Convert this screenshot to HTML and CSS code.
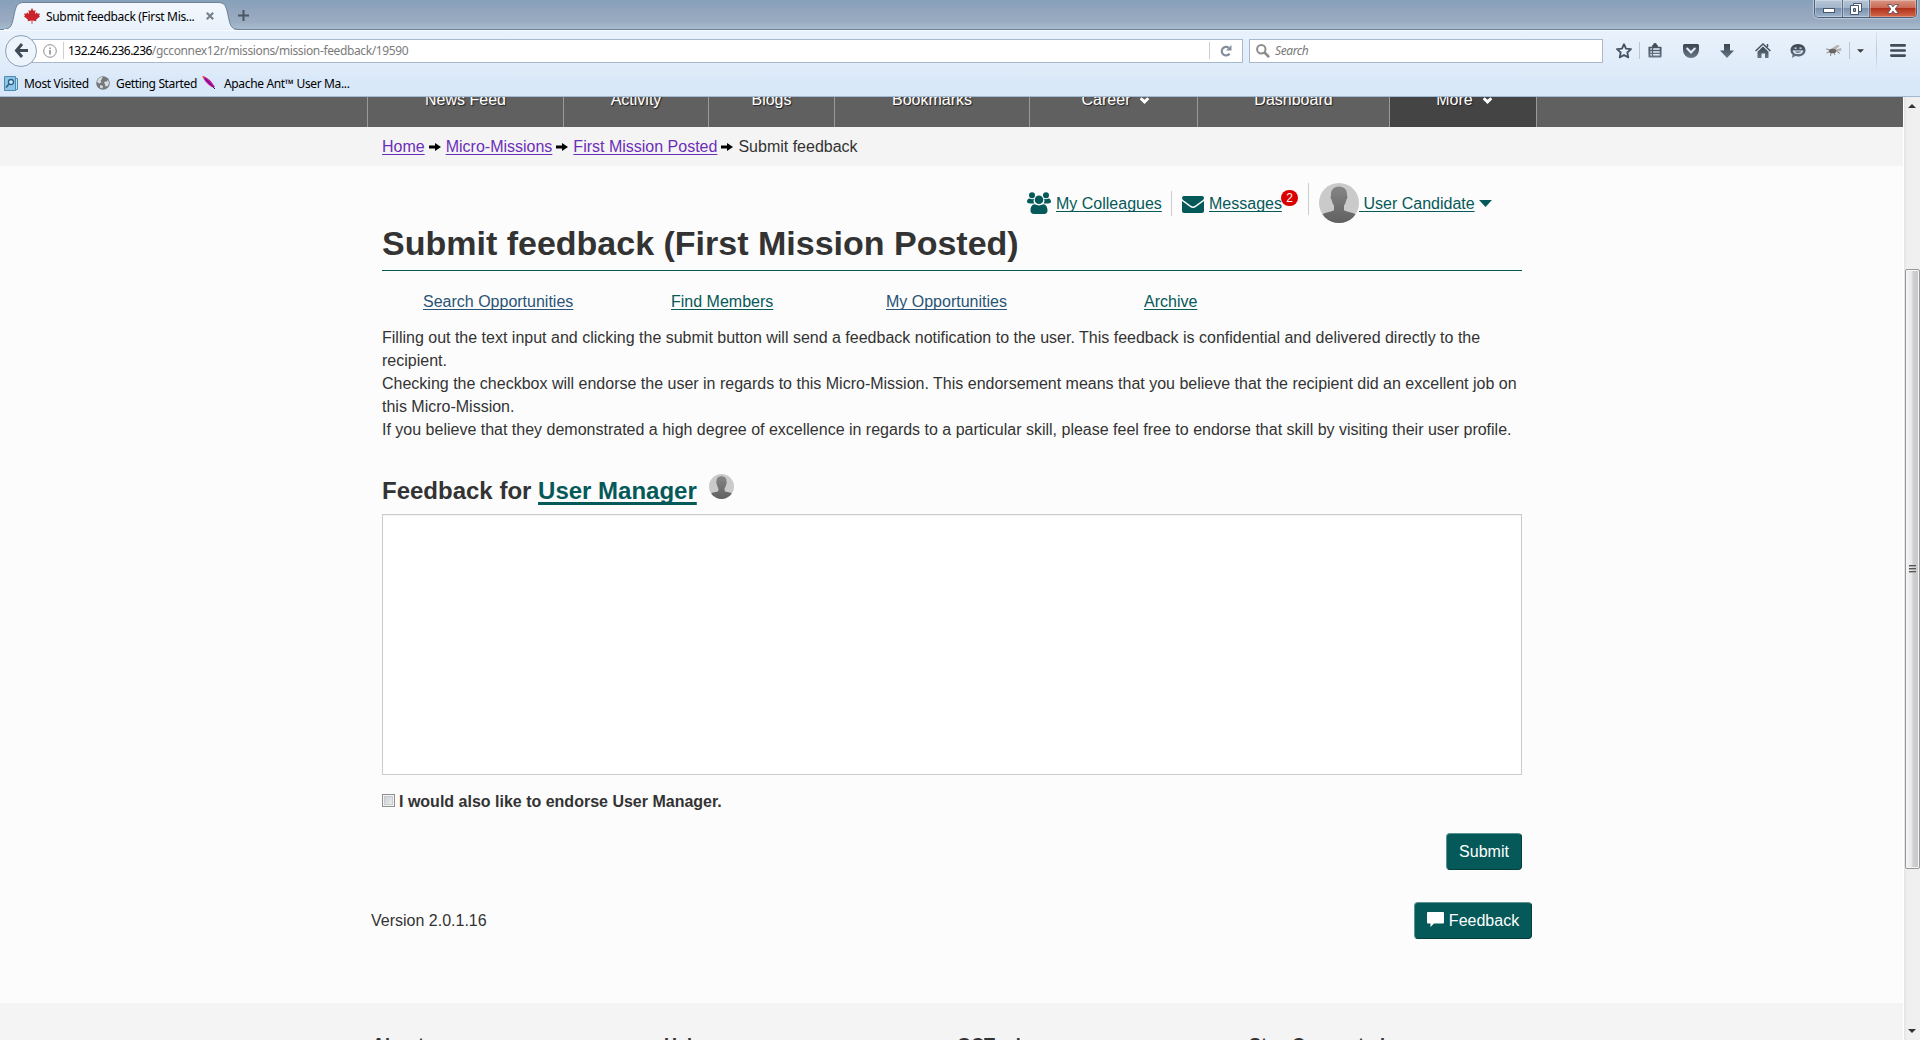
FILE: index.html
```html
<!DOCTYPE html>
<html lang="en">
<head>
<meta charset="utf-8">
<title>Submit feedback (First Mission Posted)</title>
<link rel="stylesheet" href="styles.css">
</head>
<body>
<svg class="defs" width="0" height="0">
  <defs>
    <linearGradient id="bust" x1="0" y1="0" x2="0" y2="1"><stop offset="0" stop-color="#858585"/><stop offset="1" stop-color="#606060"/></linearGradient>
    <linearGradient id="ico" x1="0" y1="0" x2="0" y2="1"><stop offset="0" stop-color="#39444f"/><stop offset="1" stop-color="#687887"/></linearGradient>
    <clipPath id="round"><circle cx="20" cy="20" r="20"/></clipPath>
    <symbol id="avatar" viewBox="0 0 40 40"><g clip-path="url(#round)"><path fill="#cacaca" d="M0 0h40v40H0z"/><path fill="url(#bust)" d="M20 3.500c5.500 0 8.300 3.500 8 9 .8 1 .4 3.300-.6 4.200-.6 3-1.400 4.400-2.400 5.800v4.800c2 1.800 10 2 12 4.500V40H3v-8.200c2-2.500 10-2.700 12-4.500v-4.800c-1-1.400-1.800-2.800-2.400-5.800-1-.9-1.400-3.200-.6-4.200-.3-5.500 2.500-9 8-9z"/></g></symbol>
    <symbol id="arrow" viewBox="0 0 12 10"><path d="M0 3.600h6V1L12 5 6 9V6.400H0z"/></symbol>
    <symbol id="chevron" viewBox="0 0 12 8"><path d="M.5 2.500 2.700.3 6 3.200 9.300.300 11.500 2.500 6 8z"/></symbol>
  </defs>
</svg>
<div class="window">
  <div class="titlebar">
    <div class="tab">
      <svg class="tab-shape" width="240" height="30" viewBox="0 0 240 30"><defs><linearGradient id="tabfill" x1="0" y1="0" x2="0" y2="1"><stop offset="0" stop-color="#f3f8fd"/><stop offset="1" stop-color="#e8f1fb"/></linearGradient></defs><path fill="url(#tabfill)" stroke="#6d8299" d="M-1 29.500H3C12 29 12 24 14 15 16 6 17 2.500 24 2.500h194c7 0 8 3.500 10 12.500 2 9 2 14 11 14.500"/><path stroke="#e8f1fb" stroke-width="2" d="M4 30h230"/></svg>
      <svg class="leaf" width="16" height="16" viewBox="0 0 16 16"><path fill="#c9242b" d="m8 0 1.600 3 1.900-1-.6 4L13 4.300l.5 1.500 2.500-.4-.9 2.400.9.700-4 3.200.4 1.500-4-.6V16h-.8v-3.400l-4 .6.4-1.500-4-3.200.9-.7L0 5.400l2.500.4L3 4.300 5.100 6l-.6-4 1.900 1z"/></svg>
      <span class="tab-title">Submit feedback (First Mis...</span>
      <svg class="tab-close" width="8" height="8" viewBox="0 0 8 8"><path stroke="#77818c" stroke-width="2.200" d="m.8.8 6.400 6.400M7.200.8.800 7.200"/></svg>
    </div>
    <svg class="newtab" width="11" height="11" viewBox="0 0 11 11"><path stroke="#4b5763" stroke-width="2" d="M5.500 0v11M0 5.500h11"/></svg>
    <div class="controls">
      <span class="ctl min"><i></i></span>
      <span class="ctl max"><svg width="12" height="12" viewBox="0 0 12 12"><path fill="#fff" stroke="#47566a" d="M3.500.5h8v8h-8z"/><path fill="#fff" stroke="#47566a" d="M.5 2.500h8v9h-8z"/><path fill="#8fa3bb" stroke="#47566a" d="M3.500 5.500h2v3h-2z"/></svg></span>
      <span class="ctl close"><svg width="12" height="10" viewBox="0 0 12 10"><path fill="#fff" stroke="#5a4450" stroke-width=".8" d="M.5.500h3.700L6 2.900 7.800.500h3.700L8.200 5l3.300 4.500H7.800L6 7.100 4.200 9.500H.5L3.800 5z"/></svg></span>
    </div>
  </div>
  <div class="toolbar">
    <div class="back"><svg width="14" height="15" viewBox="0 0 14 15"><path fill="none" stroke="#414c57" stroke-width="3" d="M8 1 2.500 7.500 8 14M2.500 7.500H14"/></svg></div>
    <div class="urlbar">
      <svg class="info" width="14" height="14" viewBox="0 0 14 14"><circle cx="7" cy="7" r="6.300" fill="none" stroke="#8d8d8d"/><path stroke="#8d8d8d" stroke-width="1.600" d="M7 6v4.500M7 3.400v1.600"/></svg>
      <span class="url"><b>132.246.236.236</b>/gcconnex12r/missions/mission-feedback/19590</span>
      <span class="reload"><svg width="12" height="12" viewBox="0 0 12 12"><path fill="none" stroke="#848e9a" stroke-width="2.200" d="M9.600 8.700A4.300 4.300 0 1 1 8.700 2.800"/><path fill="#848e9a" d="M11.500 0v5.500H6z"/></svg></span>
    </div>
    <div class="search"><svg width="14" height="14" viewBox="0 0 14 14"><circle cx="5.300" cy="5.300" r="4.200" fill="none" stroke="#8c8c8c" stroke-width="2"/><path stroke="#8c8c8c" stroke-width="2.600" d="m8.500 8.500 4.600 4.600"/></svg><span>Search</span></div>
    <div class="tools">
      <svg width="16" height="16" viewBox="0 0 16 16"><path fill="none" stroke="#45525f" stroke-width="1.800" stroke-linejoin="round" d="m8 1.200 2 4.500 5 .5-3.700 3.300 1 4.900L8 12l-4.300 2.400 1-4.900L1 6.200l5-.5z"/></svg>
      <i class="divider"></i>
      <svg class="t-list" width="14" height="15" viewBox="0 0 14 16"><path fill="url(#ico)" d="M5 2a2 2 0 0 1 4 0h1v2h3.500a.5.500 0 0 1 .5.500v10a1 1 0 0 1-1 1H1a1 1 0 0 1-1-1v-10A.5.500 0 0 1 .5 4H4V2z"/><path fill="none" stroke="#e5effa" stroke-width="1.600" d="M2 6.500h1.700M5 6.500h7M2 9.500h1.700M5 9.500h7M2 12.500h1.700M5 12.500h7"/></svg>
      <svg class="t-pocket" width="16" height="14" viewBox="0 0 16 14"><path fill="url(#ico)" d="M1.500 0h13A1.500 1.500 0 0 1 16 1.500V6A8 8 0 0 1 0 6V1.500A1.500 1.500 0 0 1 1.500 0z"/><path fill="none" stroke="#e5effa" stroke-width="2" stroke-linecap="round" d="m4.200 4.500 3.800 4 3.800-4"/></svg>
      <svg class="t-down" width="14" height="14" viewBox="0 0 14 14"><path fill="url(#ico)" d="M4 0h6v6.500h4L7 14 0 6.500h4z"/></svg>
      <svg class="t-home" width="16" height="15" viewBox="0 0 16 15"><path fill="none" stroke="#45525f" stroke-width="1.500" d="M.6 8 8 1l7.400 7M12.500 1v3"/><path fill="url(#ico)" d="m8 3.500 5.500 5.200V15H10v-4.500H6.500V15h-4V8.700z"/></svg>
      <svg class="t-chat" width="16" height="14" viewBox="0 0 16 14"><path fill="url(#ico)" d="M8 0c4.500 0 7.500 2.800 7.500 6.200S12.500 12.500 8 12.500c-1 0-2-.1-2.800-.4L2 14l.6-3.200A6 6 0 0 1 .5 6.200C.5 2.800 3.500 0 8 0z"/><path fill="none" stroke="#e5effa" stroke-width="1.200" d="M4.500 4.200h2M9.500 4.200h2M3.500 7c1 3.300 8 3.300 9 0z"/></svg>
      <svg class="t-bug" width="16" height="13" viewBox="0 0 16 13"><path fill="#b5b3b0" d="m5 5 6-4 3 .8L9 6zM8 6l7-2 .5 2.500L9 8z"/><ellipse cx="6.500" cy="7" rx="3.800" ry="2.300" fill="#6b6662"/><path fill="none" stroke="#8b8783" d="M3 5.500 0 5M3 8l-2.500 1M5 9l-.5 3M8 9l1 2M11 7.500l3 2"/></svg>
      <i class="divider d2"></i>
      <svg class="t-caret" width="7" height="4" viewBox="0 0 8 4"><path fill="#3b3b3b" d="M0 0h8L4 4z"/></svg>
      <i class="divider d3"></i>
      <svg class="t-menu" width="16" height="13" viewBox="0 0 16 13"><path stroke="#414c57" stroke-width="2.600" stroke-linecap="round" d="M1.300 1.400h13.400M1.300 6.500h13.400M1.300 11.600h13.400"/></svg>
    </div>
  </div>
  <div class="bookmarks">
    <svg width="14" height="15" viewBox="0 0 14 15"><path fill="#c4e0f3" stroke="#4a8ab5" d="M2.500 2.500h11v11h-11z"/><path fill="#8fc4e6" stroke="#4a8ab5" d="M.5.500h11v14H.5z"/><circle cx="7" cy="6" r="2.500" fill="#d8edf9" stroke="#2e5f86" stroke-width="1.300"/><path stroke="#2e5f86" stroke-width="1.500" d="m5 8-3 3.500"/></svg>
    <span class="bm1">Most Visited</span>
    <svg width="14" height="14" viewBox="0 0 14 14"><circle cx="7" cy="7" r="6.800" fill="#75797d"/><path fill="#d9dcdf" d="M2 3c1.500-1.500 3-2 4.500-2L6 3 4.500 4.500l1 1.500-2 1.500L1 6zM8 6l2.500-.5L12 4l1 3-1 3-2.500.5L9 8.500zM4 9l3 1-.5 2.500L4 11.500z"/></svg>
    <span class="bm2">Getting Started</span>
    <svg width="16" height="15" viewBox="0 0 16 15"><path fill="#d9138a" d="M.5 0c3 .5 7 3.500 9 6l3.500 5-2 .5C7 10 2 5 .5 0z"/><path stroke="#5b1aa5" stroke-width="1.200" d="m3 2.500 8 8"/><path stroke="#e08a1c" d="M.5.500 2 3"/><path stroke="#222" d="m11 11 2 2"/></svg>
    <span class="bm3">Apache Ant™ User Ma...</span>
  </div>

  <div class="view">
    <div class="page">
      <div class="nav">
        <a class="w1">News Feed</a><a class="w2">Activity</a><a class="w3">Blogs</a><a class="w4">Bookmarks</a><a class="w5">Career<svg width="11" height="7"><use href="#chevron"/></svg></a><a class="w6">Dashboard</a><a class="w7">More<svg width="11" height="7"><use href="#chevron"/></svg></a>
      </div>
      <div class="crumbs"><a>Home</a><svg width="12" height="10"><use href="#arrow"/></svg><a>Micro-Missions</a><svg width="12" height="10"><use href="#arrow"/></svg><a>First Mission Posted</a><svg width="12" height="10"><use href="#arrow"/></svg><span>Submit feedback</span></div>
      <div class="main">
        <div class="usermenu">
          <svg width="24" height="22" viewBox="0 0 24 22"><g fill="#055959"><circle cx="5" cy="3.300" r="3"/><circle cx="19" cy="3.300" r="3"/><path d="M2.500 6.500c2 .8 3 .8 4.500.3-.8 2-.5 3.500.4 4.700H3c-2 0-3-.8-3-2C0 8 1 6.500 2.500 6.500zM21.500 6.500c-2 .8-3 .8-4.500.3.8 2 .5 3.500-.4 4.700H21c2 0 3-.8 3-2 0-1.500-1-3-2.500-3z"/><circle cx="12" cy="7.800" r="4.300"/><path d="M7.800 12.300c2.500 1.500 5.900 1.500 8.400 0 3 .2 4.300 3 4.300 6.200 0 2.300-1.200 3.500-3.500 3.500H7c-2.300 0-3.500-1.200-3.500-3.500 0-3.200 1.300-6 4.300-6.200z"/></g></svg>
          <a class="colleagues">My Colleagues</a>
          <i class="bar"></i>
          <svg class="env" width="22" height="17" viewBox="0 0 22 17"><path fill="#055959" d="M2 0h18a2 2 0 0 1 2 2c0 .8-.6 1.600-1.400 2.200L13 9.700c-1.400.9-2.600.9-4 0L1.400 4.200C.6 3.600 0 2.800 0 2a2 2 0 0 1 2-2z"/><path fill="#055959" d="M0 4.900 7.800 10.800c2.300 1.700 4.100 1.700 6.400 0L22 4.900V15a2 2 0 0 1-2 2H2a2 2 0 0 1-2-2z"/></svg>
          <a class="messages">Messages<em>2</em></a>
          <i class="bar tall"></i>
          <svg class="pic" width="40" height="40"><use href="#avatar"/></svg>
          <a class="who">&nbsp;User Candidate</a>
          <svg class="down" width="13" height="7" viewBox="0 0 13 7"><path fill="#055959" d="M0 0h13L6.500 7z"/></svg>
        </div>
        <h1>Submit feedback (First Mission Posted)</h1>
        <div class="links"><a class="l1 blue">Search Opportunities</a><a class="l2">Find Members</a><a class="l3 blue">My Opportunities</a><a class="l4">Archive</a></div>
        <p>Filling out the text input and clicking the submit button will send a feedback notification to the user. This feedback is confidential and delivered directly to the<br>recipient.<br>Checking the checkbox will endorse the user in regards to this Micro-Mission. This endorsement means that you believe that the recipient did an excellent job on<br>this Micro-Mission.<br>If you believe that they demonstrated a high degree of excellence in regards to a particular skill, please feel free to endorse that skill by visiting their user profile.</p>
        <h2><span>Feedback for <a>User Manager</a></span><svg width="25" height="25"><use href="#avatar"/></svg></h2>
        <div class="textarea"></div>
        <div class="check"><i></i><b>I would also like to endorse User Manager.</b></div>
        <div class="actions"><span class="btn submit">Submit</span></div>
        <div class="version"><span>Version 2.0.1.16</span><span class="btn feedback"><svg width="17" height="15" viewBox="0 0 17 15"><path fill="#fff" d="M1 0h15a1 1 0 0 1 1 1v9.500a1 1 0 0 1-1 1H7L3.500 15v-3.500H1a1 1 0 0 1-1-1V1a1 1 0 0 1 1-1z"/></svg>Feedback</span></div>
      </div>
      <div class="footer"><span>About</span><span>Help</span><span>GCTools</span><span>Stay Connected</span></div>
    </div>
    <div class="scroll">
      <svg class="up" width="8" height="4" viewBox="0 0 8 4"><path fill="#333" d="M4 0l4 4H0z"/></svg>
      <div class="thumb"><i></i><i></i><i></i></div>
      <svg class="dn" width="8" height="4" viewBox="0 0 8 4"><path fill="#333" d="M0 0h8L4 4z"/></svg>
    </div>
  </div>
</div>
</body>
</html>
```
FILE: styles.css
```css
* { box-sizing: border-box; }
body { margin: 0; background: #fcfcfc; font: 16px/23px "Liberation Sans", Arial, sans-serif; color: #333; overflow: hidden; }
svg { display: block; flex: none; }
.defs { position: absolute; }
.window { width: 1920px; height: 1040px; display: flex; flex-direction: column; overflow: hidden; }

/* browser frame */
.titlebar, .toolbar, .bookmarks { font-family: "Noto Sans", "Open Sans", sans-serif; font-size: 12px; white-space: nowrap; color: #000; }
.titlebar { height: 30px; flex: none; display: flex; background: linear-gradient(#87a0ba, #93a6be 40%, #9aacc1 75%, #a9bccf); border-bottom: 1px solid #6d8299; }
.tab { position: relative; width: 242px; height: 30px; display: flex; align-items: center; padding: 2px 0 0 24px; }
.tab-shape { position: absolute; left: 0; top: 0; }
.leaf, .tab-title, .tab-close { position: relative; }
.tab-title { width: 150px; margin-left: 6px; letter-spacing: -0.33px; }
.tab-close { margin-left: 10px; }
.newtab { margin-top: 10px; margin-left: -4px; }
.controls { margin-left: auto; margin-right: 3px; width: 103px; height: 18px; display: flex; border: 1px solid #4c5f78; border-top: 0; border-radius: 0 0 5px 5px; overflow: hidden; box-shadow: 0 0 1px 1px #b9c9da; }
.ctl { display: flex; align-items: center; justify-content: center; border-right: 1px solid #5c6f88; background: linear-gradient(#b6c5d7, #a2b5cb 45%, #7b92af 50%, #9fb4cb); box-shadow: inset 0 0 0 1px rgba(255,255,255,.3); }
.min { width: 28px; }
.min i { width: 12px; height: 5px; margin-top: 4px; background: #fff; border: 1px solid #47566a; }
.max { width: 27px; }
.close { flex: 1; border-right: 0; background: linear-gradient(#d99685, #c96a55 45%, #b0311a 50%, #d5694c); }

.toolbar { height: 40px; flex: none; display: flex; align-items: center; background: linear-gradient(#e9f2fc, #dfebf9); border-top: 1px solid #f5faff; }
.back { position: relative; z-index: 1; width: 32px; height: 32px; margin-left: 5px; border: 1px solid #8ba0b8; border-radius: 50%; background: #edf4fc; display: flex; align-items: center; justify-content: center; padding-right: 1px; }
.urlbar { width: 1211px; height: 24px; margin-left: -5px; background: #fff; border: 1px solid #a9b9cc; display: flex; align-items: center; }
.info { margin-left: 10px; }
.url { margin-left: 6px; padding-left: 4px; line-height: 17px; border-left: 1px solid #cfcfcf; color: #7b7b7b; letter-spacing: -0.37px; }
.url b { font-weight: 400; color: #000; letter-spacing: -0.55px; }
.reload { margin-left: auto; width: 33px; height: 17px; border-left: 1px solid #ccc; display: flex; align-items: center; justify-content: center; }
.search { width: 354px; height: 24px; margin-left: 6px; padding-left: 6px; background: #fff; border: 1px solid #a9b9cc; display: flex; align-items: center; gap: 5px; }
.search span { font-style: italic; color: #777; letter-spacing: -0.4px; }
.tools { display: flex; align-items: center; padding-left: 13px; }
.divider { width: 1px; height: 17px; margin-left: 7px; background: #b8c6d6; }
.t-list { margin-left: 8px; }
.t-pocket { margin-left: 21px; }
.t-down { margin-left: 21px; }
.t-home { margin-left: 21px; }
.t-chat { margin-left: 19px; }
.t-bug { margin-left: 20px; }
.d2 { margin-left: 7px; }
.t-caret { margin-left: 7px; }
.d3 { margin-left: 12px; height: 38px; background: linear-gradient(#dbe7f4, #b8c6d6, #dbe7f4); }
.t-menu { margin-left: 13px; }
.bookmarks { height: 27px; flex: none; display: flex; align-items: center; padding-left: 4px; background: linear-gradient(#dfebf9, #d9e8f8 10px); border-bottom: 1px solid #a3b9d0; }
.bookmarks span { flex: none; letter-spacing: -0.35px; }
.bm1 { width: 65px; margin: 0 7px 0 6px; }
.bm2 { width: 80px; margin: 0 6px; }
.bm3 { margin-left: 6px; }

/* page */
.view { flex: 1; display: flex; overflow: hidden; }
.page { flex: 1; overflow: hidden; background: #fcfcfc; }
.nav { height: 30px; background: #606060; padding-left: 367px; display: flex; overflow: hidden; }
.nav a { border-left: 1px solid #999; height: 37px; margin-top: -7px; display: flex; justify-content: center; line-height: 20px; color: #fff; text-shadow: 1px 1px 1px #222; white-space: nowrap; text-decoration: none; }
.nav svg { margin: 7px 0 0 9px; fill: #fff; }
.w1 { width: 196px; } .w2 { width: 145px; } .w3 { width: 126px; } .w4 { width: 195px; } .w5 { width: 168px; } .w6 { width: 192px; }
.nav .w5 { padding-left: 5px; }
.nav .w7 { width: 148px; padding-left: 3px; background: #444; border-right: 1px solid #999; }
.crumbs { height: 39px; background: #f4f4f4; padding-left: 382px; display: flex; align-items: center; white-space: nowrap; }
.crumbs svg { margin: 0 5px 0 4px; fill: #000; }
a { text-decoration: underline 1px; text-underline-offset: 2px; text-decoration-skip-ink: none; color: #055959; }
.crumbs a { color: #6c2eb9; }
.main { height: 837px; padding: 17px 382px 0; }
.usermenu { height: 40px; display: flex; align-items: center; margin-left: 645px; white-space: nowrap; }
.colleagues { width: 105px; margin-left: 5px; }
.bar { width: 1px; height: 25px; margin: 0 10px; background: #ccc; }
.env { margin-top: 2px; }
.messages { position: relative; width: 74px; margin-left: 5px; }
.messages em { position: absolute; left: 72px; top: -2px; width: 17px; height: 16px; border-radius: 8px; background: #d90000; color: #fff; font: 12px/16px "Liberation Sans", Arial, sans-serif; text-align: center; }
.tall { height: 32px; margin: -8px 10px 0 25px; }
.who { width: 115px; }
.down { margin-left: 5px; }
h1 { margin: 0; width: 1140px; height: 48px; font-size: 34px; line-height: 41px; border-bottom: 1px solid #055959; white-space: nowrap; }
.links { display: grid; grid-template-columns: 248px 215px 258px auto; padding: 19px 0 0 41px; }
.links a { justify-self: start; }
.links .blue { color: #295376; }
p { margin: 13px 0 0; white-space: nowrap; }
h2 { margin: 35px 0 0; height: 30px; font-size: 24px; line-height: 30px; display: flex; white-space: nowrap; }
h2 a { text-decoration-thickness: 3px; text-underline-offset: 3px; }
h2 svg { margin: -2px 0 0 12px; }
.textarea { width: 1140px; height: 261px; margin-top: 8px; background: #fff; border: 1px solid #ccc; box-shadow: inset 0 1px 1px rgba(0,0,0,.06); }
.check { display: flex; align-items: center; margin-top: 15px; }
.check i { width: 13px; height: 13px; margin: -2px 4px 0 0; border: 1px solid #8e8f8f; background: linear-gradient(135deg, #c4c8cc, #f4f4f4); box-shadow: inset 0 0 0 1px #f4f4f4, inset 0 0 0 2px #c8ccd0; }
.actions { display: flex; justify-content: flex-end; width: 1140px; margin-top: 20px; }
.btn { height: 37px; display: flex; align-items: center; justify-content: center; background: #055959; color: #fff; border-radius: 4px; border: 1px solid; border-color: #5f9494 #033f3f #033f3f #5f9494; }
.submit { width: 76px; }
.version { display: flex; align-items: center; justify-content: space-between; margin: 32px 0 0 -11px; width: 1161px; }
.feedback { width: 118px; }
.feedback svg { margin: -3px 5px 0 0; }
.footer { height: 60px; background: #f4f4f4; padding: 30px 0 0 372px; display: grid; grid-template-columns: 292px 293px 292px auto; font-weight: 700; font-size: 18px; line-height: 24px; }

/* scrollbar */
.scroll { width: 17px; height: 943px; flex: none; display: flex; flex-direction: column; align-items: center; background: linear-gradient(90deg, #e3e3e3, #efefef 3px, #f0f0f0); border-left: 1px solid #fff; }
.up { margin-top: 7px; }
.thumb { width: 15px; height: 600px; margin-top: 161px; border: 1px solid #979797; border-radius: 2px; background: linear-gradient(90deg, #f5f5f5, #e6e6e8 48%, #cfcfd2 52%, #c8c8cc); box-shadow: inset 0 0 0 1px #f6f6f6; display: flex; flex-direction: column; align-items: center; justify-content: center; gap: 1px; }
.thumb i { width: 7px; height: 2px; border-top: 1px solid #555; background: #aaa; }
.dn { margin-top: 160px; }
```
